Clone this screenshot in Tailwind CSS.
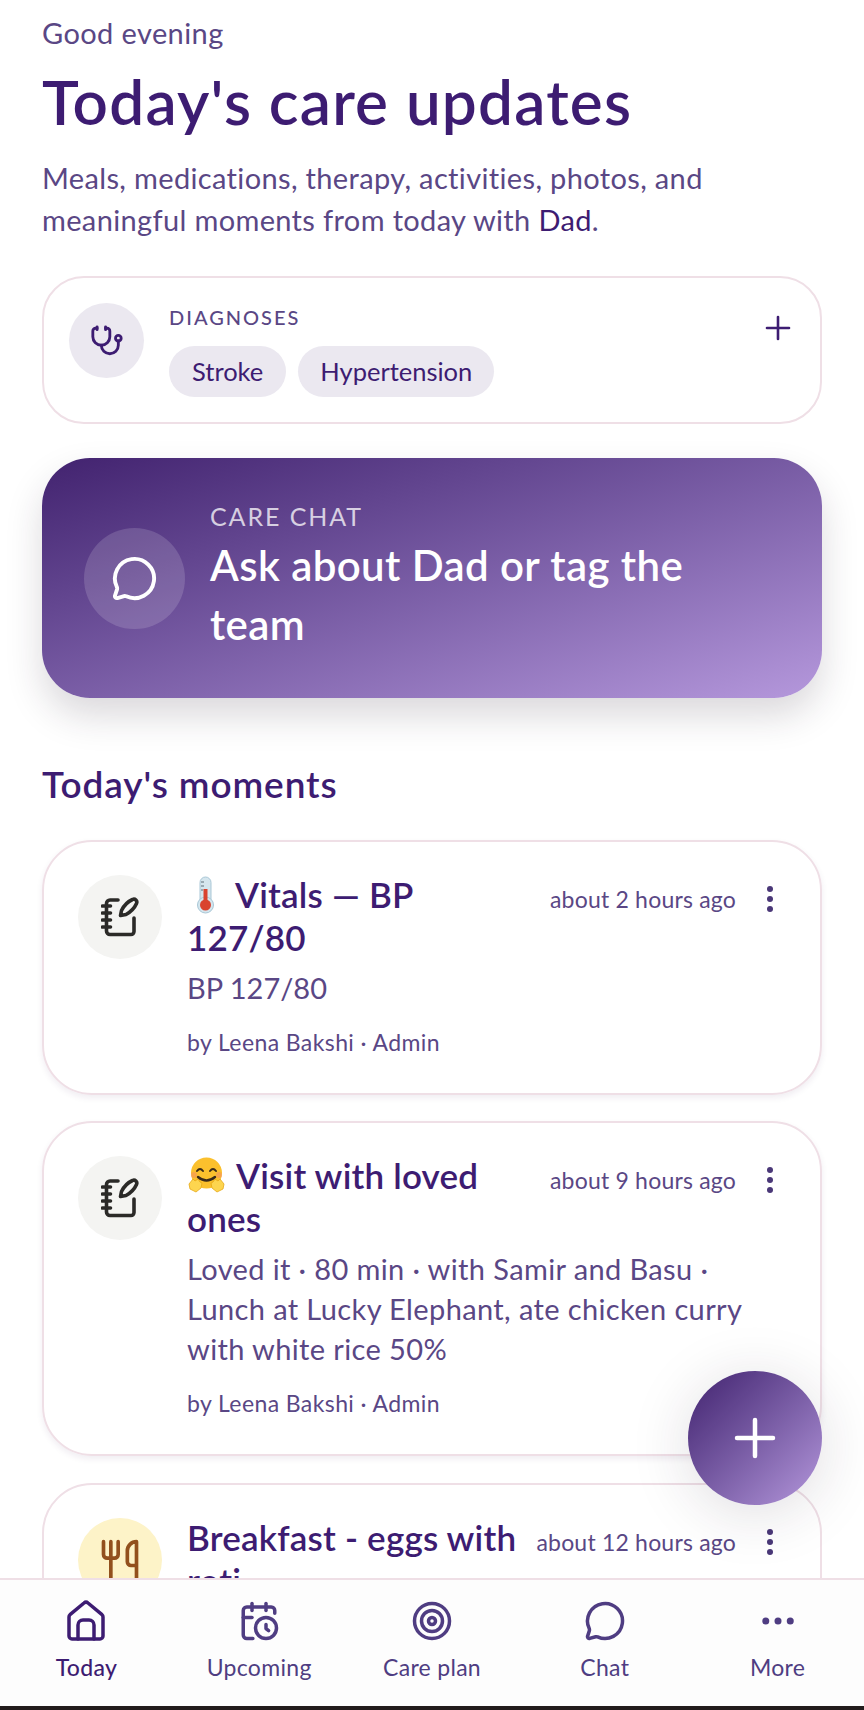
<!DOCTYPE html>
<html lang="en">
<head>
  <meta charset="UTF-8" />
  <title>Today's care updates</title>
  <script src="https://cdn.jsdelivr.net/npm/@tailwindcss/browser@4"></script>
</head>
<body class="bg-white font-['Lato',sans-serif] text-[#5a4785]">
  <div class="relative h-[1710px] w-[864px] overflow-hidden flex flex-col">
    <main class="flex-1 min-h-0 overflow-hidden px-[42px] pt-[16px]">
      <p class="text-[29px] leading-[34px] tracking-[0.4px]">Good evening</p>
      <h1 class="mt-[15px] text-[62px] leading-[72px] tracking-[1.2px] font-semibold text-[#3d1c72]">Today's care updates</h1>
      <p class="mt-[20px] text-[29px] leading-[42px] tracking-[0.35px]">Meals, medications, therapy, activities, photos, and meaningful moments from today with <span class="text-[#3d1c72]">Dad</span>.</p>

      <section class="mt-[35px] h-[148px] rounded-[42px] border-2 border-[#efdfe6] pl-[25px] pr-[28px] pt-[25px] flex gap-[25px]">
        <div class="size-[75px] shrink-0 rounded-full bg-[#ebe8f0] flex items-center justify-center">
          <svg class="size-[34px] text-[#3d1c72]" viewBox="0 0 24 24" fill="none" stroke="currentColor" stroke-width="2" stroke-linecap="round" stroke-linejoin="round"><path d="M11 2v2"/><path d="M5 2v2"/><path d="M5 3H4a2 2 0 0 0-2 2v4a6 6 0 0 0 12 0V5a2 2 0 0 0-2-2h-1"/><path d="M8 15a6 6 0 0 0 12 0v-3"/><circle cx="20" cy="10" r="2"/></svg>
        </div>
        <div class="flex-1">
          <p class="mt-[1px] text-[20px] leading-[26px] tracking-[2px] font-medium">DIAGNOSES</p>
          <div class="mt-[16px] flex gap-[12px] text-[25.5px] text-[#3d1c72]">
            <span class="h-[51px] px-[23px] rounded-full bg-[#ebe8f0] flex items-center">Stroke</span>
            <span class="h-[51px] px-[22px] rounded-full bg-[#ebe8f0] flex items-center">Hypertension</span>
          </div>
        </div>
        <svg class="size-[28px] mt-[11px] text-[#3d1c72]" viewBox="0 0 28 28" fill="none" stroke="currentColor" stroke-width="2.6" stroke-linecap="round"><path d="M14 3v22"/><path d="M3 14h22"/></svg>
      </section>

      <section class="mt-[34px] h-[240px] rounded-[48px] bg-linear-to-br from-[#42226f] to-[#b598dc] shadow-[0_18px_36px_rgba(40,30,50,0.17)] pl-[42px] pr-[60px] flex items-center gap-[25px] text-white">
        <div class="size-[101px] shrink-0 rounded-full bg-white/15 flex items-center justify-center">
          <svg class="size-[47px]" viewBox="0 0 24 24" fill="none" stroke="currentColor" stroke-width="2" stroke-linecap="round" stroke-linejoin="round"><path d="M2.992 16.342a2 2 0 0 1 .094 1.167l-1.065 3.29a1 1 0 0 0 1.236 1.168l3.413-.998a2 2 0 0 1 1.099.092 10 10 0 1 0-4.777-4.719"/></svg>
        </div>
        <div class="flex-1 -mt-[2px]">
          <p class="text-[25px] leading-[30px] tracking-[1.9px] text-white/75">CARE CHAT</p>
          <p class="mt-[5px] text-[42px] leading-[59px] tracking-[0.4px] font-semibold">Ask about Dad or tag the team</p>
        </div>
      </section>

      <h2 class="mt-[64px] text-[37px] leading-[44px] tracking-[0.9px] font-semibold text-[#3d1c72]">Today's moments</h2>

      <article class="mt-[34px] h-[255px] rounded-[50px] border-2 border-[#efdfe6] shadow-[0_3px_6px_rgba(60,30,90,0.08)] pl-[34px] pr-[47px] pt-[33px] flex gap-[25px]">
        <div class="size-[84px] shrink-0 rounded-full bg-[#f4f4f2] flex items-center justify-center">
          <svg class="w-[38px] h-[40px] text-[#2b2a28]" viewBox="0 0 38 40" fill="none" stroke="currentColor" stroke-width="3.600" stroke-linecap="round" stroke-linejoin="round"><path d="M17 3H9a3.500 3.500 0 0 0-3.500 3.500V34A3.500 3.500 0 0 0 9 37.500H30a3 3 0 0 0 3-3V21"/><path d="M1.500 9h8M1.500 16h8M1.500 23h8M1.500 30h8"/><path d="M19.500 18.500l1-5C23 8.500 27 4.500 31.500 2.500a3 3 0 0 1 4 4C33.500 11 29.500 15 25 17.500Z"/></svg>
        </div>
        <div class="flex-1 min-w-0">
          <div class="flex items-start gap-[18px]">
            <h3 class="flex-1 -mt-[2px] text-[35px] leading-[43px] tracking-[0.2px] font-semibold text-[#3d1c72]">
              <svg class="inline-block align-[-6px] w-[38px] h-[38px] mr-[10px]" viewBox="0 0 38 38"><rect x="13" y="1" width="11" height="30" rx="5.5" fill="#d5e6ee" stroke="#a9c7d6"/><circle cx="18.5" cy="29" r="8" fill="#d5e6ee" stroke="#a9c7d6"/><rect x="16.5" y="13" width="4" height="16" fill="#d9432f"/><circle cx="18.5" cy="29" r="5.5" fill="#d9432f"/><path d="M14 6h3M14 10h3M14 14h2" stroke="#5f6f78" stroke-width="1"/></svg>Vitals — BP<br />127/80
            </h3>
            <span class="shrink-0 mt-[10px] text-[23px] leading-[28px] tracking-[0.2px]">about 2 hours ago</span>
            <svg class="shrink-0 w-[6px] h-[28px] mt-[10px] ml-[13px] text-[#4a3878]" viewBox="0 0 6 28" fill="currentColor"><circle cx="3" cy="4" r="3"/><circle cx="3" cy="14" r="3"/><circle cx="3" cy="24" r="3"/></svg>
          </div>
          <p class="mt-[9px] text-[29px] leading-[40px]">BP 127/80</p>
          <p class="mt-[19px] text-[23px] leading-[30px] tracking-[0.4px]">by Leena Bakshi · Admin</p>
        </div>
      </article>

      <article class="mt-[26px] h-[335px] rounded-[50px] border-2 border-[#efdfe6] shadow-[0_3px_6px_rgba(60,30,90,0.08)] pl-[34px] pr-[47px] pt-[33px] flex gap-[25px]">
        <div class="size-[84px] shrink-0 rounded-full bg-[#f4f4f2] flex items-center justify-center">
          <svg class="w-[38px] h-[40px] text-[#2b2a28]" viewBox="0 0 38 40" fill="none" stroke="currentColor" stroke-width="3.600" stroke-linecap="round" stroke-linejoin="round"><path d="M17 3H9a3.500 3.500 0 0 0-3.500 3.500V34A3.500 3.500 0 0 0 9 37.500H30a3 3 0 0 0 3-3V21"/><path d="M1.500 9h8M1.500 16h8M1.500 23h8M1.500 30h8"/><path d="M19.500 18.500l1-5C23 8.500 27 4.500 31.500 2.500a3 3 0 0 1 4 4C33.500 11 29.500 15 25 17.500Z"/></svg>
        </div>
        <div class="flex-1 min-w-0">
          <div class="flex items-start gap-[18px]">
            <h3 class="flex-1 -mt-[2px] text-[35px] leading-[43px] tracking-[0.2px] font-semibold text-[#3d1c72]">
              <svg class="inline-block align-[-6px] w-[39px] h-[38px] mr-[10px]" viewBox="0 0 39 38"><circle cx="19.5" cy="16" r="15.5" fill="#fbc02d"/><path d="M10 14q3-4 6 0M23 14q3-4 6 0" fill="none" stroke="#3a2a1a" stroke-width="2" stroke-linecap="round"/><path d="M11 20q8.500 7 17 0" fill="none" stroke="#3a2a1a" stroke-width="2.400" stroke-linecap="round"/><circle cx="7" cy="18" r="3" fill="#f48a6a" opacity=".5"/><circle cx="32" cy="18" r="3" fill="#f48a6a" opacity=".5"/><path d="M2 27l4-5 2 2 3-2 2 3 2 1-1 5-5 4-6-3z" fill="#fdd54f" stroke="#e6a817" stroke-width=".8"/><path d="M37 27l-4-5-2 2-3-2-2 3-2 1 1 5 5 4 6-3z" fill="#fdd54f" stroke="#e6a817" stroke-width=".8"/></svg>Visit with loved<br />ones
            </h3>
            <span class="shrink-0 mt-[10px] text-[23px] leading-[28px] tracking-[0.2px]">about 9 hours ago</span>
            <svg class="shrink-0 w-[6px] h-[28px] mt-[10px] ml-[13px] text-[#4a3878]" viewBox="0 0 6 28" fill="currentColor"><circle cx="3" cy="4" r="3"/><circle cx="3" cy="14" r="3"/><circle cx="3" cy="24" r="3"/></svg>
          </div>
          <p class="mt-[9px] text-[29px] leading-[40px] tracking-[0.38px]">Loved it · 80 min · with Samir and Basu · Lunch at Lucky Elephant, ate chicken curry with white rice 50%</p>
          <p class="mt-[19px] text-[23px] leading-[30px] tracking-[0.4px]">by Leena Bakshi · Admin</p>
        </div>
      </article>

      <article class="mt-[27px] h-[255px] rounded-[50px] border-2 border-[#efdfe6] pl-[34px] pr-[47px] pt-[33px] flex gap-[25px]">
        <div class="size-[84px] shrink-0 rounded-full bg-[#fdf3c8] flex items-center justify-center">
          <svg class="size-[44px] text-[#92501d]" viewBox="0 0 24 24" fill="none" stroke="currentColor" stroke-width="2" stroke-linecap="round" stroke-linejoin="round"><path d="M3 2v7c0 1.100.9 2 2 2h4a2 2 0 0 0 2-2V2"/><path d="M7 2v20"/><path d="M21 15V2a5 5 0 0 0-5 5v6c0 1.100.9 2 2 2h3Zm0 0v7"/></svg>
        </div>
        <div class="flex-1 min-w-0">
          <div class="flex items-start gap-[14px]">
            <h3 class="flex-1 -mt-[2px] text-[35px] leading-[43px] tracking-[0.2px] font-semibold text-[#3d1c72]">Breakfast - eggs with<br />roti</h3>
            <span class="shrink-0 mt-[10px] text-[23px] leading-[28px] tracking-[0.2px]">about 12 hours ago</span>
            <svg class="shrink-0 w-[6px] h-[28px] mt-[10px] ml-[17px] text-[#4a3878]" viewBox="0 0 6 28" fill="currentColor"><circle cx="3" cy="4" r="3"/><circle cx="3" cy="14" r="3"/><circle cx="3" cy="24" r="3"/></svg>
          </div>
        </div>
      </article>
    </main>

    <nav class="h-[128px] shrink-0 border-t-2 border-[#efdfe6] bg-[#fdfdfd] grid grid-cols-5 text-[23px] leading-[28px] tracking-[0.3px] text-[#4f3d82]">
      <a class="flex flex-col items-center pt-[20px] gap-[11px] font-medium text-[#3d1c72]">
        <svg class="size-[42px]" viewBox="0 0 42 42" fill="none" stroke="currentColor" stroke-width="3.500" stroke-linecap="round" stroke-linejoin="round"><path d="M4 17a3 3 0 0 1 1-2.300L19 3a3 3 0 0 1 4 0l14 11.700a3 3 0 0 1 1 2.300v19a3 3 0 0 1-3 3H7a3 3 0 0 1-3-3Z"/><path d="M13 39V25a5 5 0 0 1 5-5h6a5 5 0 0 1 5 5v14"/></svg>
        <span>Today</span>
      </a>
      <a class="flex flex-col items-center pt-[20px] gap-[11px]">
        <svg class="size-[42px]" viewBox="0 0 24 24" fill="none" stroke="currentColor" stroke-width="2" stroke-linecap="round" stroke-linejoin="round"><path d="M21 7.500V6a2 2 0 0 0-2-2H5a2 2 0 0 0-2 2v14a2 2 0 0 0 2 2h3.500"/><path d="M16 2v4"/><path d="M8 2v4"/><path d="M3 10h5"/><path d="M17.500 17.500 16 16.300V14"/><circle cx="16" cy="16" r="6"/></svg>
        <span>Upcoming</span>
      </a>
      <a class="flex flex-col items-center pt-[20px] gap-[11px]">
        <svg class="size-[42px]" viewBox="0 0 24 24" fill="none" stroke="currentColor" stroke-width="2" stroke-linecap="round" stroke-linejoin="round"><circle cx="12" cy="12" r="10"/><circle cx="12" cy="12" r="6"/><circle cx="12" cy="12" r="2"/></svg>
        <span>Care plan</span>
      </a>
      <a class="flex flex-col items-center pt-[20px] gap-[11px]">
        <svg class="size-[42px]" viewBox="0 0 24 24" fill="none" stroke="currentColor" stroke-width="2" stroke-linecap="round" stroke-linejoin="round"><path d="M2.992 16.342a2 2 0 0 1 .094 1.167l-1.065 3.29a1 1 0 0 0 1.236 1.168l3.413-.998a2 2 0 0 1 1.099.092 10 10 0 1 0-4.777-4.719"/></svg>
        <span>Chat</span>
      </a>
      <a class="flex flex-col items-center pt-[20px] gap-[11px]">
        <svg class="size-[42px]" viewBox="0 0 24 24" fill="currentColor"><circle cx="5" cy="12" r="2"/><circle cx="12" cy="12" r="2"/><circle cx="19" cy="12" r="2"/></svg>
        <span>More</span>
      </a>
    </nav>
    <div class="h-[4px] shrink-0 bg-[#221c1c]"></div>

    <button class="absolute left-[688px] top-[1371px] size-[134px] rounded-full bg-linear-to-br from-[#42226f] to-[#b598dc] shadow-[0_8px_60px_rgba(40,30,50,0.15)] flex items-center justify-center text-white">
      <svg class="size-[44px]" viewBox="0 0 44 44" fill="none" stroke="currentColor" stroke-width="4.500" stroke-linecap="round"><path d="M22 4v36"/><path d="M4 22h36"/></svg>
    </button>
  </div>
</body>
</html>
